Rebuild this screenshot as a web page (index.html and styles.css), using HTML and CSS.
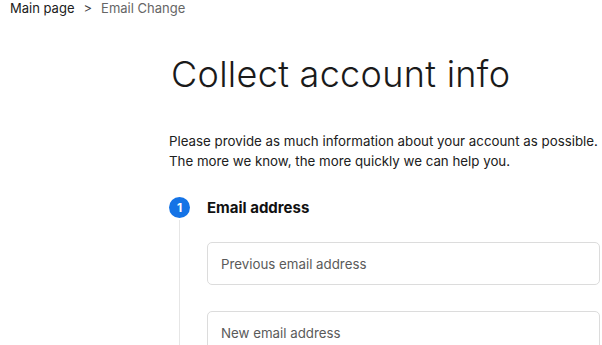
FILE: index.html
```html
<!DOCTYPE html>
<html>
<head>
<meta charset="utf-8">
<link rel="stylesheet" href="styles.css">
</head>
<body>
<nav class="crumbs">
  <span class="crumb-link">Main page</span>
  <span class="crumb-sep">&gt;</span>
  <span class="crumb-current">Email Change</span>
</nav>
<main class="content">
  <h1 class="title">Collect account info</h1>
  <p class="intro">Please provide as much information about your account as possible.<br>The more we know, the more quickly we can help you.</p>
  <section class="step">
    <div class="step-rail">
      <span class="step-num">1</span>
      <span class="step-line"></span>
    </div>
    <div class="step-body">
      <h2 class="step-title">Email address</h2>
      <div class="field">Previous email address</div>
      <div class="field">New email address</div>
    </div>
  </section>
</main>
</body>
</html>
```
FILE: styles.css
```css
html, body { margin: 0; padding: 0; background: #fff; }
body {
  font-family: Inter, "Noto Sans", sans-serif;
  color: #202020;
  overflow: hidden;
  height: 345px;
}
.crumbs {
  display: flex;
  align-items: center;
  gap: 9px;
  padding: 0 0 0 10px;
  height: 16px;
  font-size: 13px;
  line-height: 16px;
}
.crumb-link { color: #202020; }
.crumb-sep { color: #444; font-size: 13px; }
.crumb-current { color: #666; }
.content {
  padding-left: 169px;
}
.title {
  margin: 36px 0 0 2px;
  font-size: 36px;
  font-weight: 300;
  line-height: 44px;
  letter-spacing: 0.3px;
  color: #1a1a1a;
}
.intro {
  margin: 35px 0 0 0;
  font-size: 13.3px;
  line-height: 20px;
  color: #202020;
  white-space: nowrap;
}
.step {
  display: flex;
  margin-top: 26px;
}
.step-rail {
  width: 21px;
  display: flex;
  flex-direction: column;
  align-items: center;
  margin-right: 17px;
}
.step-num {
  width: 21px;
  height: 21px;
  border-radius: 50%;
  background: #1473e6;
  color: #fff;
  font-size: 12px;
  font-weight: 700;
  line-height: 21px;
  text-align: center;
}
.step-line {
  width: 1px;
  flex: 1;
  margin-top: 2px;
  background: #e6e6e6;
  height: 200px;
}
.step-body {
  flex: 1;
  padding-right: 2px;
}
.step-title {
  margin: 0;
  font-size: 15px;
  font-weight: 700;
  line-height: 21px;
  color: #111;
}
.field {
  margin-top: 24px;
  height: 43px;
  box-sizing: border-box;
  border: 1px solid #dcdcdc;
  border-radius: 5px;
  padding: 0 13px;
  display: flex;
  align-items: center;
  font-size: 13.3px;
  color: #5a5a5a;
}
.field + .field { margin-top: 26px; }
```
